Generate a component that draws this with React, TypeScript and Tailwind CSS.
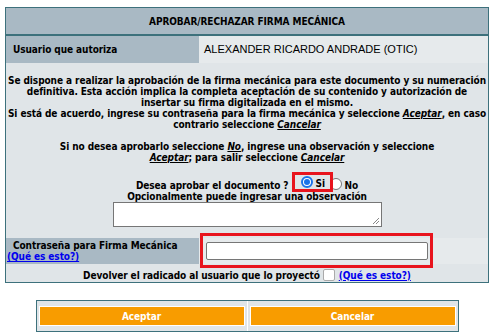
import React from 'react';

const verdana = "font-['DejaVu_Sans_Condensed','DejaVu_Sans',Verdana,sans-serif] font-stretch-condensed";

const Link: React.FC<{ children: React.ReactNode }> = ({ children }) => (
  <span className="italic underline">{children}</span>
);

export default function App() {
  return (
    <div className={`w-[494px] h-[334px] bg-white text-black ${verdana} text-[10px] font-bold leading-[11px] tracking-[-0.08px]`}>
      <div className="pt-[7px] px-[5px]">
        <div className="border border-[#3d717c] bg-[#e0e5e8]">
          {/* titulo */}
          <div className="h-[28px] bg-[#a9b9c4] border-b-2 border-[#3d717c] flex items-center justify-center">
            APROBAR/RECHAZAR FIRMA MECÁNICA
          </div>
          {/* usuario */}
          <div className="flex h-[27px]">
            <div className="w-[193px] bg-[#a9b9c4] flex items-center pl-[7px]">Usuario que autoriza</div>
            <div className="flex-1 bg-[#e6eaec] flex items-center pl-[5px] font-normal font-['Liberation_Sans',Arial,sans-serif] font-stretch-normal tracking-normal text-[11px]">
              ALEXANDER RICARDO ANDRADE (OTIC)
            </div>
          </div>
          {/* texto */}
          <div className="text-center pt-[12px]">
            <p>
              Se dispone a realizar la aprobación de la firma mecánica para este documento y su numeración
              definitiva. Esta acción implica la completa aceptación de su contenido y autorización de
              insertar su firma digitalizada en el mismo.
            </p>
            <p>
              Si está de acuerdo, ingrese su contraseña para la firma mecánica y seleccione <Link>Aceptar</Link>, en caso
              contrario seleccione <Link>Cancelar</Link>
            </p>
            <p className="mt-[11px] max-w-[384px] mx-auto">
              Si no desea aprobarlo seleccione <Link>No</Link>, ingrese una observación y seleccione{' '}
              <Link>Aceptar</Link>; para salir seleccione <Link>Cancelar</Link>
            </p>
            <div className="mt-[9px] flex items-start justify-center h-[20px]">
              <span className="mt-[8px]">Desea aprobar el documento ?</span>
              <span className="ml-[3px] border-[3px] border-[#e8141d] h-[20px] w-[41px] pl-[6px] flex items-center relative z-10">
                <span className="w-[12px] h-[12px] rounded-full border-2 border-[#1a73e8] flex items-center justify-center bg-white">
                  <span className="w-[6px] h-[6px] rounded-full bg-[#1a73e8]" />
                </span>
                <span className="ml-[3px] mt-[3px]">Si</span>
              </span>
              <span className="-ml-[3px] mt-[6px] w-[12px] h-[12px] rounded-full border border-[#767676] bg-white" />
              <span className="ml-[3px] mt-[8px]">No</span>
            </div>
            <div className="-mt-[1px]">Opcionalmente puede ingresar una observación</div>
            <div className="flex justify-center">
              <div className="w-[269px] h-[25px] bg-white border border-[#767676] relative">
                <svg className="absolute right-[1px] bottom-[1px]" width="9" height="9" viewBox="0 0 9 9">
                  <path d="M8 2 L2 8 M8 5 L5 8" stroke="#888" strokeWidth="1" />
                </svg>
              </div>
            </div>
          </div>
          {/* contraseña */}
          <div className="flex mt-[11px] h-[26px] bg-[#e6eaec]">
            <div className="w-[193px] bg-[#a9b9c4] text-left pt-[2px]">
              <div className="pl-[7px]">Contraseña para Firma Mecánica</div>
              <div className="pl-[1px] text-[#0000ee] underline">(Qué es esto?)</div>
            </div>
            <div className="pl-[1px] -mt-[5px]">
              <div className="w-[233px] h-[35px] border-[3px] border-[#e8141d] flex items-center pl-[3px]">
                <div className="w-[222px] h-[18px] bg-white border border-[#767676] rounded-[2px]" />
              </div>
            </div>
          </div>
          <div className="flex items-center justify-center h-[12px] mt-[5px] mb-[1px]">
            <span>Devolver el radicado al usuario que lo proyectó</span>
            <span className="ml-[3px] w-[12px] h-[12px] border border-[#aaa] rounded-[2px] bg-white" />
            <span className="ml-[4px] text-[#0000ee] underline">(Qué es esto?)</span>
          </div>
        </div>
      </div>
      {/* botones */}
      <div className="flex justify-center mt-[17px]">
        <div className="w-[423px] h-[32px] border border-[#3d717c] bg-[#e0e5e8] flex">
          <div className="flex-1 px-[2px] pt-[5px] border-r border-white">
            <div className="h-[20px] bg-[#f89c00] border border-white text-white flex items-center justify-center">Aceptar</div>
          </div>
          <div className="flex-1 px-[2px] pt-[5px]">
            <div className="h-[20px] bg-[#f89c00] border border-white text-white flex items-center justify-center">Cancelar</div>
          </div>
        </div>
      </div>
    </div>
  );
}
